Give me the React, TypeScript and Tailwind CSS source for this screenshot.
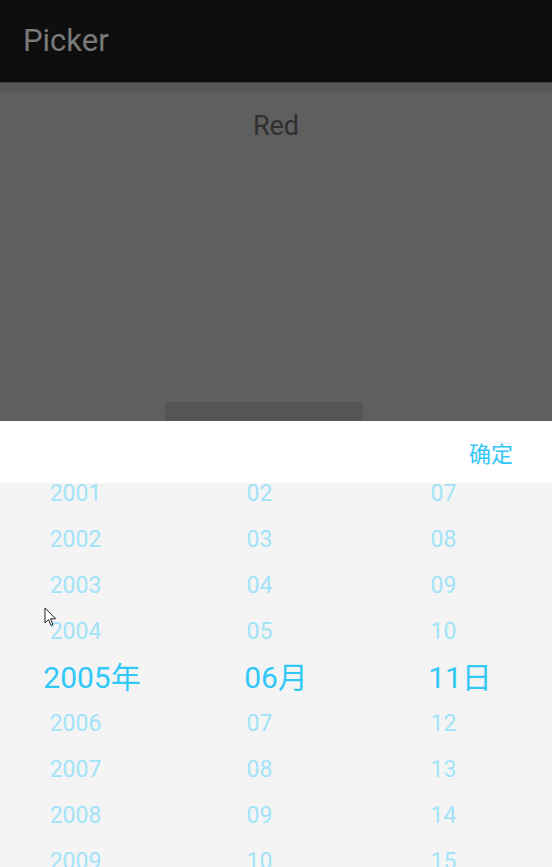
import React from 'react';

const years = ['2001', '2002', '2003', '2004', '2005', '2006', '2007', '2008', '2009'];
const months = ['02', '03', '04', '05', '06', '07', '08', '09', '10'];
const days = ['07', '08', '09', '10', '11', '12', '13', '14', '15'];

const fontStack = { fontFamily: 'Roboto, "Noto Sans CJK SC", sans-serif' };

function WheelColumn({ items, unit }: { items: string[]; unit: string }) {
  return (
    <div className="flex flex-1 flex-col">
      {items.map((item, i) =>
        i === 4 ? (
          <div key={item} className="flex h-[46px] items-center justify-center pb-[2px] text-[30px] text-[#30c8f7]">
            {item}
            {unit}
          </div>
        ) : (
          <div key={item} className="flex h-[46px] items-center justify-center pr-[33px] text-[23px] text-[#a2e3f9]">
            {item}
          </div>
        )
      )}
    </div>
  );
}

export default function App() {
  return (
    <div className="relative flex h-[867px] w-[552px] flex-col overflow-hidden bg-[#5f5f5f]" style={fontStack}>
      {/* Action bar */}
      <div className="flex h-[82px] shrink-0 items-center bg-[#0e0e0e] px-[23px]">
        <span className="text-[31px] text-[#7a7a7a]">Picker</span>
      </div>
      <div className="h-px bg-[#3c3c3c]" />
      <div className="h-[9px] bg-[#585858]" />

      {/* Dimmed content */}
      <div className="flex flex-1 flex-col items-center">
        <div className="mt-[19px] text-[27px] leading-[30px] text-[#2f2f2f]">Red</div>
        <div className="flex-1" />
        <div className="ml-[165px] h-[19px] w-[198px] self-start rounded-t-[4px] bg-[#555555]" />
      </div>

      {/* Picker sheet */}
      <div className="flex h-[62px] shrink-0 items-center justify-end bg-white pr-[39px] pt-[4px]">
        <span className="text-[22px] text-[#33c6f6]">确定</span>
      </div>
      <div className="h-[384px] shrink-0 overflow-hidden bg-[#f4f4f4]">
        <div className="-mt-[12px] flex">
          <WheelColumn items={years} unit="年" />
          <WheelColumn items={months} unit="月" />
          <WheelColumn items={days} unit="日" />
        </div>
      </div>

      {/* Mouse pointer */}
      <svg className="absolute left-[44px] top-[607px]" width="13" height="20" viewBox="0 0 13 20">
        <path d="M1 1 L1 16 L4.5 12.5 L7 18.5 L9 17.5 L6.5 11.8 L11.5 11.8 Z" fill="#ffffff" stroke="#222222" strokeWidth="1" strokeLinejoin="round" />
      </svg>
    </div>
  );
}
